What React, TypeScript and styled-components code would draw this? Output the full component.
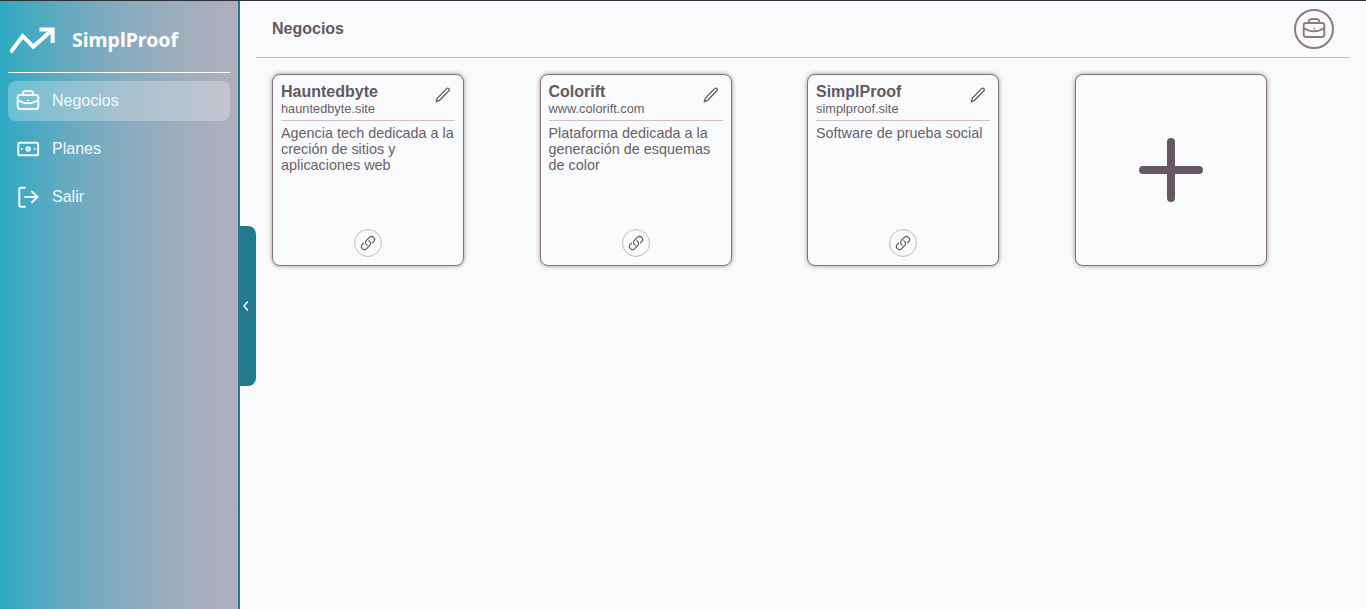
import React from "react";
import styled, { createGlobalStyle } from "styled-components";

const Global = createGlobalStyle`
  html, body { margin: 0; padding: 0; height: 100%; background: #f9fafc; overflow: hidden; }
  #root { height: 100%; }
  * { box-sizing: border-box; }
`;

const Page = styled.div`
  position: relative;
  display: flex;
  height: 609px;
  background: #f9fafc;
  border-top: 1px solid #2b3036;
  font-family: "Liberation Sans", Arial, sans-serif;
  color: #655860;
`;

const Sidebar = styled.aside`
  width: 240px;
  flex: none;
  padding: 0 8px;
  background: linear-gradient(90deg, #2fa9c4 0%, #60aac1 25%, #86abbf 50%, #9daebd 75%, #b1aebd 100%);
  border-right: 2px solid #237a8c;
  color: #fff;
`;

const Brand = styled.div`
  height: 72px;
  display: flex;
  align-items: center;
  gap: 16px;
  padding: 5px 0 0 2px;
  border-bottom: 1px solid #fff;
`;

const BrandName = styled.span`
  font-family: "Noto Sans", sans-serif;
  font-size: 19.5px;
  font-weight: 700;
`;

const Nav = styled.nav`
  display: flex;
  flex-direction: column;
  gap: 8px;
  margin-top: 8px;
`;

const NavItem = styled.a<{ $active?: boolean }>`
  display: flex;
  align-items: center;
  gap: 12px;
  height: 40px;
  padding-left: 8px;
  border-radius: 8px;
  font-size: 16px;
  color: #f4f8fb;
  background: ${(p) => (p.$active ? "rgba(255,255,255,0.27)" : "transparent")};
`;

const Toggle = styled.button`
  position: absolute;
  left: 238px;
  top: 225px;
  width: 18px;
  height: 160px;
  padding: 0 2px 0 0;
  border: 0;
  border-radius: 0 8px 8px 0;
  background: #237a8c;
  color: #fff;
  display: flex;
  align-items: center;
  justify-content: center;
`;

const Main = styled.main`
  flex: 1;
  min-width: 0;
  padding: 0 16px;
`;

const Header = styled.header`
  height: 57px;
  display: flex;
  align-items: center;
  justify-content: space-between;
  padding: 0 16px;
  border-bottom: 1px solid #c4bcc0;
`;

const Title = styled.h1`
  margin: 0;
  font-size: 16px;
  font-weight: 700;
`;

const Avatar = styled.div`
  width: 40px;
  height: 40px;
  border-radius: 50%;
  border: 2px solid #8d7b83;
  color: #8d7b83;
  display: flex;
  align-items: center;
  justify-content: center;
`;

const Grid = styled.section`
  display: grid;
  grid-template-columns: repeat(4, 267.5px);
  padding: 16px 0 0 16px;
`;

const CardBox = styled.article`
  width: 192px;
  height: 192px;
  display: flex;
  flex-direction: column;
  padding: 8px;
  border: 1px solid #85737b;
  border-radius: 8px;
  background: #f9fafc;
  box-shadow: 0 0 4px rgba(101, 88, 96, 0.65);
`;

const CardHead = styled.div`
  display: flex;
  justify-content: space-between;
  padding-bottom: 4px;
  border-bottom: 1px solid #d3bcc5;
`;

const CardName = styled.div`
  font-size: 16px;
  font-weight: 700;
  line-height: 18px;
`;

const CardUrl = styled.div`
  font-size: 12.8px;
  line-height: 15px;
  color: #6b5f66;
`;

const EditIcon = styled.span`
  display: flex;
  margin: 3px 3px 0 0;
  color: #655860;
`;

const CardText = styled.p`
  flex: 1;
  margin: 4px 0 0;
  font-size: 14.4px;
  line-height: 16px;
  color: #6b5f66;
`;

const LinkRound = styled.span`
  align-self: center;
  width: 28px;
  height: 28px;
  border: 1px solid #d3b3bf;
  border-radius: 50%;
  display: flex;
  align-items: center;
  justify-content: center;
`;

const AddCard = styled(CardBox)`
  align-items: center;
  justify-content: center;
`;

const Briefcase = () => (
  <svg width="24" height="24" viewBox="0 0 24 24" fill="none" stroke="currentColor" strokeWidth="1.9" strokeLinecap="round" strokeLinejoin="round">
    <rect x="1.7" y="6" width="20.6" height="14" rx="2.200" />
    <path d="M1.700 11c3 2.200 6.500 3.300 10.300 3.300S19.300 13.200 22.300 11" />
    <path d="M6.900 6V4c0-1 .7-1.700 1.700-1.800a30 30 0 0 1 6.800 0c1 .1 1.700.8 1.700 1.800v2" />
    <path d="M12.200 11.600h.01" />
  </svg>
);

const Banknote = () => (
  <svg width="24" height="24" viewBox="0 0 24 24" fill="none" stroke="currentColor" strokeWidth="2" strokeLinecap="round" strokeLinejoin="round">
    <rect x="2.300" y="5.700" width="19.800" height="12.600" rx="1.600" />
    <circle cx="12.200" cy="12" r="1.700" />
    <path d="M5.800 12h.01M18.600 12h.01" />
  </svg>
);

const Logout = () => (
  <svg width="24" height="24" viewBox="0 0 24 24" fill="none" stroke="currentColor" strokeWidth="2" strokeLinecap="round" strokeLinejoin="round">
    <path d="M9 2.700H4.800c-.9 0-1.500.6-1.500 1.500v16c0 .9.600 1.500 1.500 1.500H9" />
    <path d="M9 12h12.500M16 6.800 21.500 12 16 17.200" />
  </svg>
);

const TrendUp = () => (
  <svg width="46" height="28" viewBox="0 0 46 28" fill="none" stroke="#fff" strokeWidth="4" strokeLinecap="round" strokeLinejoin="miter">
    <path d="M1.500 26 12.700 11l10.600 10.700L42 5" />
    <path d="M29.500 4.500h13.200V18" strokeLinecap="butt" />
  </svg>
);

const Pencil = () => (
  <svg width="18" height="18" viewBox="0 0 24 24" fill="none" stroke="currentColor" strokeWidth="1.800" strokeLinecap="round" strokeLinejoin="round">
    <path d="M16.860 3.490a2.100 2.100 0 1 1 2.970 2.970L7.500 19.100 3 21l1.500-4.800L16.860 3.490Z" />
  </svg>
);

const LinkIcon = () => (
  <svg width="16" height="16" viewBox="0 0 24 24" fill="none" stroke="currentColor" strokeWidth="1.800" strokeLinecap="round" strokeLinejoin="round">
    <path d="M13.190 8.688a4.500 4.500 0 0 1 1.242 7.244l-4.500 4.500a4.500 4.500 0 0 1-6.364-6.364l1.757-1.757m13.350-.622 1.757-1.757a4.500 4.500 0 0 0-6.364-6.364l-4.500 4.500a4.500 4.500 0 0 0 1.242 7.244" />
  </svg>
);

const Chevron = () => (
  <svg width="12" height="12" viewBox="0 0 24 24" fill="none" stroke="currentColor" strokeWidth="3" strokeLinecap="round" strokeLinejoin="round">
    <path d="M15 4 8 12l7 8" />
  </svg>
);

const Plus = () => (
  <svg width="64" height="64" viewBox="0 0 64 64" fill="none" stroke="#655860" strokeWidth="8" strokeLinecap="round">
    <path d="M32 4v56M4 32h56" />
  </svg>
);

const cards = [
  { name: "Hauntedbyte", url: "hauntedbyte.site", text: "Agencia tech dedicada a la creción de sitios y aplicaciones web" },
  { name: "Colorift", url: "www.colorift.com", text: "Plataforma dedicada a la generación de esquemas de color" },
  { name: "SimplProof", url: "simplproof.site", text: "Software de prueba social" },
];

export default function App() {
  return (
    <Page>
      <Global />
      <Sidebar>
        <Brand>
          <TrendUp />
          <BrandName>SimplProof</BrandName>
        </Brand>
        <Nav>
          <NavItem $active><Briefcase />Negocios</NavItem>
          <NavItem><Banknote />Planes</NavItem>
          <NavItem><Logout />Salir</NavItem>
        </Nav>
      </Sidebar>
      <Toggle aria-label="Colapsar"><Chevron /></Toggle>
      <Main>
        <Header>
          <Title>Negocios</Title>
          <Avatar><Briefcase /></Avatar>
        </Header>
        <Grid>
          {cards.map((c) => (
            <CardBox key={c.name}>
              <CardHead>
                <div>
                  <CardName>{c.name}</CardName>
                  <CardUrl>{c.url}</CardUrl>
                </div>
                <EditIcon><Pencil /></EditIcon>
              </CardHead>
              <CardText>{c.text}</CardText>
              <LinkRound><LinkIcon /></LinkRound>
            </CardBox>
          ))}
          <AddCard><Plus /></AddCard>
        </Grid>
      </Main>
    </Page>
  );
}
